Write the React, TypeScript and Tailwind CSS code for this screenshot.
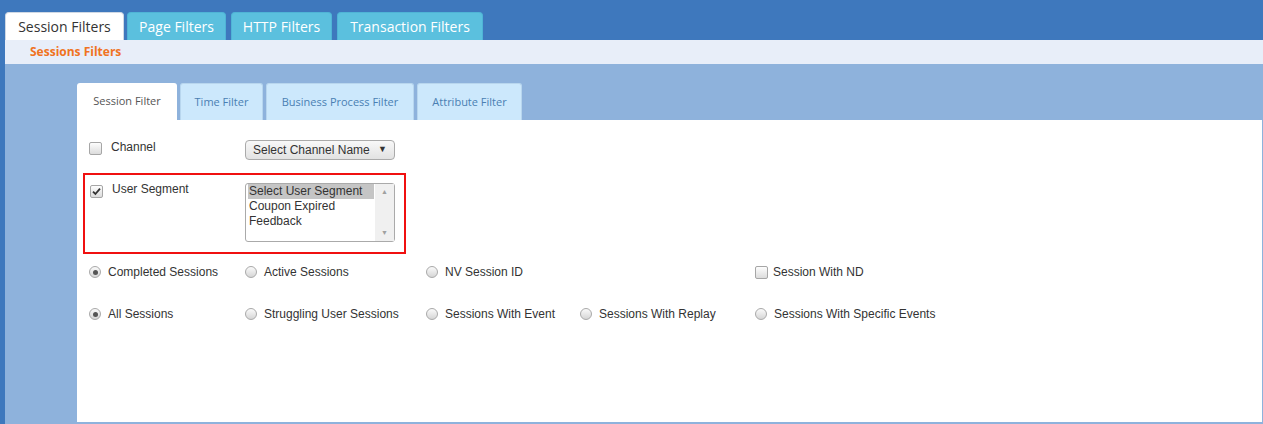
import React from 'react';

const body = "font-['Liberation_Sans',Arial,sans-serif]";

const Check = ({ on = false }: { on?: boolean }) => (
  <span className="inline-flex h-[13px] w-[13px] shrink-0 items-center justify-center rounded-[2px] border border-[#a6a6a6] bg-gradient-to-b from-[#fdfdfd] to-[#dcdcdc]">
    {on && (
      <svg width="9" height="9" viewBox="0 0 9 9">
        <path d="M1 4.6 L3.4 7 L8 1.6" fill="none" stroke="#333" strokeWidth="1.8" />
      </svg>
    )}
  </span>
);

const Radio = ({ on = false }: { on?: boolean }) => (
  <span className="inline-flex h-[12px] w-[12px] shrink-0 items-center justify-center rounded-full border border-[#a9a9a9] bg-gradient-to-b from-[#fafafa] to-[#d6d6d6]">
    {on && <span className="h-[5px] w-[5px] rounded-full bg-[#555]" />}
  </span>
);

const Opt = ({ label, on, box }: { label: string; on?: boolean; box?: boolean }) => (
  <div className={`flex items-center ${box ? 'gap-[5px]' : 'gap-[7px]'}`}>
    {box ? <Check on={on} /> : <Radio on={on} />}
    <span>{label}</span>
  </div>
);

const App = () => {
  const topTabs = ['Page Filters', 'HTTP Filters', 'Transaction Filters'];
  const subTabs = [
    { name: 'Time Filter', w: 'w-[83px]' },
    { name: 'Business Process Filter', w: 'w-[148px]' },
    { name: 'Attribute Filter', w: 'w-[105px]' },
  ];

  return (
    <div className="flex h-[424px] w-[1263px] flex-col overflow-hidden bg-[#3e78bd] pl-[5px]">
      <div className="flex h-[40px] items-end gap-[3px] pt-[12px] font-['Open_Sans',sans-serif] text-[14px]">
        <div className="flex h-[28px] w-[119px] items-center justify-center rounded-t-[4px] border border-b-0 border-[#cfd8e4] bg-white text-[#333]">
          Session Filters
        </div>
        {topTabs.map((t, i) => (
          <div
            key={t}
            className={`flex h-[28px] items-center justify-center rounded-t-[4px] border border-b-0 border-[#4fb4d6] bg-[#5bc0de] text-white ${
              i === 0 ? 'w-[99px]' : i === 1 ? 'ml-[2px] w-[101px]' : 'ml-[2px] w-[146px]'
            }`}
          >
            {t}
          </div>
        ))}
      </div>

      <div className="flex h-[24px] items-center bg-[#e8eef9] pl-[25px] font-['Open_Sans',sans-serif] text-[12px] font-bold text-[#f07322]">
        Sessions Filters
      </div>

      <div className="flex flex-1 flex-col bg-[#8eb2dc] pb-[2px] pl-[72px] pr-[1px] pt-[19px]">
        <div className="flex h-[37px] items-end gap-[3px] font-['Open_Sans',sans-serif] text-[11px]">
          <div className="flex h-[37px] w-[100px] items-center justify-center rounded-t-[3px] bg-white text-[#555]">
            Session Filter
          </div>
          {subTabs.map((t) => (
            <div
              key={t.name}
              className={`flex h-[37px] ${t.w} items-center justify-center rounded-t-[3px] border border-b-0 border-[#b8d6ee] bg-[#cce8fc] text-[#4a7fb3]`}
            >
              {t.name}
            </div>
          ))}
        </div>

        <div className={`flex-1 bg-white ${body} text-[12px] text-[#333]`}>
          <div className="flex h-[53px] items-start pl-[12px] pt-[20px]">
            <div className="flex w-[156px] items-center gap-[9px]">
              <Check />
              <span className="-mt-[2px]">Channel</span>
            </div>
            <div className="flex h-[20px] w-[150px] items-center justify-between rounded-[4px] border border-[#aaa] bg-gradient-to-b from-[#f8f8f8] to-[#e2e2e2] pl-[7px] pr-[7px] text-[12px] text-[#333]">
              <span>Select Channel Name</span>
              <span className="text-[9px]">▼</span>
            </div>
          </div>

          <div className="ml-[6px] flex h-[81px] w-[323px] items-start border-2 border-[#f01010] pl-[5px] pt-[8px]">
            <div className="flex w-[155px] items-start gap-[9px] pt-[2px]">
              <Check on />
              <span className="-mt-[5px]">User Segment</span>
            </div>
            <div className="flex h-[59px] w-[150px] rounded-[3px] border border-[#aaa] bg-white">
              <div className="flex flex-1 flex-col pl-[2px] pr-[1px] leading-[15px]">
                <span className="bg-[#c5c5c5] pl-[1px]">Select User Segment</span>
                <span className="pl-[1px]">Coupon Expired</span>
                <span className="pl-[1px]">Feedback</span>
              </div>
              <div className="flex w-[19px] flex-col items-center justify-between bg-[#f0f0f0] py-[3px] text-[7px] text-[#a0a0a0]">
                <span>▲</span>
                <span>▼</span>
              </div>
            </div>
          </div>

          <div className="grid grid-cols-[156px_181px_154px_175px_auto] pl-[12px] pt-[9px]">
            <Opt label="Completed Sessions" on />
            <Opt label="Active Sessions" />
            <Opt label="NV Session ID" />
            <div />
            <Opt label="Session With ND" box />
          </div>

          <div className="grid grid-cols-[156px_181px_154px_175px_auto] pl-[12px] pt-[24px]">
            <Opt label="All Sessions" on />
            <Opt label="Struggling User Sessions" />
            <Opt label="Sessions With Event" />
            <Opt label="Sessions With Replay" />
            <Opt label="Sessions With Specific Events" />
          </div>
        </div>
      </div>
    </div>
  );
};

export default App;
